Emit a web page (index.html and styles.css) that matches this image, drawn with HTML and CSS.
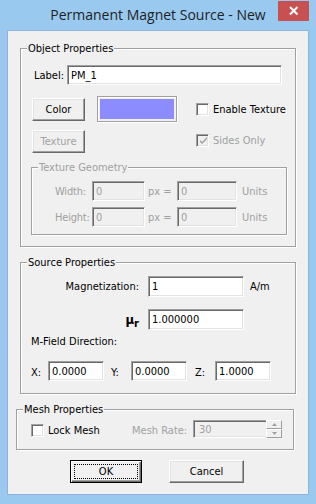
FILE: index.html
```html
<!DOCTYPE html>
<html>
<head>
<meta charset="utf-8">
<title>Permanent Magnet Source - New</title>
<link rel="stylesheet" href="styles.css">
</head>
<body>
<div class="window">
  <div class="titlebar">
    <div></div>
    <div class="title">Permanent Magnet Source - New</div>
    <div class="close"><svg width="31" height="20" viewBox="0 0 31 20"><path d="M12 6 L19.5 13.5 M19.5 6 L12 13.5" stroke="#fff" stroke-width="2" fill="none"/></svg></div>
  </div>
  <div class="client">
    <div class="group g-object">
      <div class="legend">Object Properties</div>
      <div class="row r-label">
        <span class="lbl-label">Label:</span>
        <div class="edit e-label">PM_1</div>
      </div>
      <div class="row r-color">
        <div class="btn b-color">Color</div>
        <div class="swatch"><div class="swatch-fill"></div></div>
        <div class="check c-enable"><span class="cb"></span><span>Enable Texture</span></div>
      </div>
      <div class="row r-texture">
        <div class="btn b-texture disabled">Texture</div>
        <div class="check c-sides disabled"><span class="cb cb-dis"><svg width="9" height="9" viewBox="0 0 9 9"><path d="M1 3 L1 5 L3 7 L8 2 L8 0 L3 5 Z" fill="#a0a0a0"/></svg></span><span>Sides Only</span></div>
      </div>
      <div class="group g-texgeom disabled">
        <div class="legend">Texture Geometry</div>
        <div class="geo-row g1">
          <span class="geo-lbl">Width:</span>
          <div class="edit e-dis e-px">0</div>
          <span class="px">px =</span>
          <div class="edit e-dis e-units">0</div>
          <span class="units">Units</span>
        </div>
        <div class="geo-row g2">
          <span class="geo-lbl">Height:</span>
          <div class="edit e-dis e-px">0</div>
          <span class="px">px =</span>
          <div class="edit e-dis e-units">0</div>
          <span class="units">Units</span>
        </div>
      </div>
    </div>

    <div class="group g-source">
      <div class="legend">Source Properties</div>
      <div class="row r-mag">
        <span class="src-lbl">Magnetization:</span>
        <div class="edit e-src">1</div>
        <span class="unit-am">A/m</span>
      </div>
      <div class="row r-mu">
        <span class="src-lbl mu"><b>μ<sub>r</sub></b></span>
        <div class="edit e-src">1.000000</div>
      </div>
      <div class="mfield">M-Field Direction:</div>
      <div class="row r-xyz">
        <span class="ax ax-x">X:</span>
        <div class="edit e-xyz">0.0000</div>
        <span class="ax ax-y">Y:</span>
        <div class="edit e-xyz">0.0000</div>
        <span class="ax ax-z">Z:</span>
        <div class="edit e-xyz">1.0000</div>
      </div>
    </div>

    <div class="group g-mesh">
      <div class="legend">Mesh Properties</div>
      <div class="row r-mesh">
        <div class="check c-lock"><span class="cb"></span><span>Lock Mesh</span></div>
        <span class="mesh-rate disabled">Mesh Rate:</span>
        <div class="spin">
          <div class="spin-val">30</div>
          <div class="spin-btns">
            <div class="sb"><svg width="5" height="3" viewBox="0 0 5 3"><path d="M2.5 0 L5 3 L0 3 Z" fill="#a0a0a0"/></svg></div>
            <div class="sb"><svg width="5" height="3" viewBox="0 0 5 3"><path d="M0 0 L5 0 L2.5 3 Z" fill="#a0a0a0"/></svg></div>
          </div>
        </div>
      </div>
    </div>

    <div class="row r-buttons">
      <div class="btn b-ok"><span>OK</span></div>
      <div class="btn b-cancel">Cancel</div>
    </div>
  </div>
</div>
</body>
</html>
```

FILE: styles.css
```css
* { box-sizing: border-box; }
html, body { margin: 0; padding: 0; }
body {
  width: 316px;
  height: 504px;
  overflow: hidden;
  font-family: "DejaVu Sans Condensed", "DejaVu Sans", sans-serif;
  font-size: 11px;
  line-height: 13px;
  color: #000;
}
.window {
  width: 316px;
  height: 504px;
  background: #99c9ef;
  display: flex;
  flex-direction: column;
  padding: 0 7px 9px 7px;
}
.titlebar {
  height: 30px;
  margin: 0 -7px;
  display: grid;
  grid-template-columns: 1fr auto 1fr;
  align-items: start;
}
.title {
  font-family: "Open Sans", "Noto Sans", sans-serif;
  font-size: 14px;
  line-height: 30px;
  color: #1f1f1f;
  white-space: nowrap;
}
.close {
  justify-self: end;
  margin: 1px 7px 0 0;
  width: 31px;
  height: 20px;
  background: #c75050;
}
.close svg { display: block; }
.client {
  flex: 1;
  background: #f0f0f0;
  border: 1px solid #8db4dc;
  display: flex;
  flex-direction: column;
  align-items: flex-start;
}
.row { display: flex; align-items: center; }
.disabled { color: #a0a0a0; }

.group {
  position: relative;
  border: 1px solid #a0a0a0;
  box-shadow: 1px 1px 0 #fff, inset 1px 1px 0 #fff;
  display: flex;
  flex-direction: column;
  align-items: flex-start;
}
.legend {
  position: absolute;
  top: -7px;
  left: 6px;
  padding: 0 1px;
  background: #f0f0f0;
  white-space: nowrap;
}

.edit {
  height: 20px;
  background: #fff;
  border: 1px solid;
  border-color: #a0a0a0 #fff #fff #a0a0a0;
  box-shadow: inset 1px 1px 0 #696969, inset -1px -1px 0 #e3e3e3;
  padding: 3px 0 0 3px;
  white-space: nowrap;
}
.e-dis { background: #f0f0f0; color: #a0a0a0; }

.btn {
  height: 23px;
  background: #f0f0f0;
  border: 1px solid;
  border-color: #fff #696969 #696969 #fff;
  box-shadow: inset -1px -1px 0 #a0a0a0, inset 1px 1px 0 #e3e3e3;
  display: flex;
  align-items: center;
  justify-content: center;
}

.check { display: flex; align-items: center; gap: 4px; white-space: nowrap; }
.cb {
  width: 13px;
  height: 13px;
  flex: none;
  background: #fff;
  border: 1px solid;
  border-color: #a0a0a0 #fff #fff #a0a0a0;
  box-shadow: inset 1px 1px 0 #696969, inset -1px -1px 0 #e3e3e3;
  display: flex;
  align-items: center;
  justify-content: center;
}
.cb-dis { background: #f0f0f0; }
.cb svg { display: block; margin: 1px 0 0 1px; }

/* Object Properties */
.g-object {
  margin: 17px 0 0 12px;
  width: 276px;
  height: 199px;
}
.r-label { margin-top: 16px; padding-left: 13px; }
.lbl-label { width: 33px; }
.e-label { width: 215px; }

.r-color { margin-top: 11px; padding-left: 11px; align-items: flex-start; height: 27px; }
.b-color { width: 53px; margin-top: 2px; }
.swatch {
  margin-left: 12px;
  width: 80px;
  height: 26px;
  border: 1px solid #a0a0a0;
  box-shadow: 1px 1px 0 #fff, inset 1px 1px 0 #fff;
  padding: 2px;
}
.swatch-fill { width: 100%; height: 100%; background: #8c8cff; }
.c-enable { margin: 7px 0 0 19px; }

.r-texture { margin-top: 7px; padding-left: 11px; align-items: flex-start; height: 23px; }
.b-texture { width: 53px; }
.c-sides { margin: 4px 0 0 111px; }

.g-texgeom {
  margin: 14px 0 0 10px;
  width: 256px;
  height: 68px;
}
.geo-row { display: flex; align-items: center; padding-left: 23px; }
.geo-row.g1 { margin-top: 13px; }
.geo-row.g2 { margin-top: 6px; }
.geo-lbl { width: 37px; letter-spacing: -0.2px; white-space: nowrap; }
.e-px { width: 53px; }
.px { width: 29px; margin-left: 3px; }
.e-units { width: 60px; }
.units { margin-left: 5px; }

/* Source Properties */
.g-source {
  margin: 15px 0 0 12px;
  width: 276px;
  height: 132px;
}
.r-mag { margin-top: 13px; }
.src-lbl { width: 118px; text-align: right; margin-right: 9px; }
.e-src { width: 96px; height: 21px; }
.unit-am { margin-left: 6px; }
.r-mu { margin-top: 12px; }
.mu b { font-size: 13px; font-weight: bold; }
.mu sub { font-size: 11px; vertical-align: -3px; line-height: 0; }
.mfield { margin: 5px 0 0 10px; }
.r-xyz { margin-top: 13px; padding-left: 10px; }
.ax { padding-top: 2px; }
.ax-x { width: 17px; }
.ax-y { width: 20px; margin-left: 7px; }
.ax-z { width: 20px; margin-left: 8px; }
.e-xyz { width: 56px; }

/* Mesh Properties */
.g-mesh {
  margin: 15px 0 0 8px;
  width: 278px;
  height: 41px;
}
.r-mesh { margin-top: 10px; padding-left: 14px; align-items: flex-start; }
.c-lock { margin-top: 4px; width: 101px; }
.mesh-rate { margin-top: 4px; width: 61px; white-space: nowrap; }
.spin {
  width: 89px;
  height: 18px;
  background: #f0f0f0;
  border: 1px solid;
  border-color: #a0a0a0 #fff #fff #a0a0a0;
  box-shadow: inset 1px 1px 0 #696969, inset -1px -1px 0 #e3e3e3;
  display: flex;
  justify-content: space-between;
  color: #a0a0a0;
}
.spin-val { padding: 2px 0 0 5px; }
.spin-btns { width: 16px; display: flex; flex-direction: column; margin: -1px -1px -1px 0; }
.sb {
  flex: 1;
  background: #f0f0f0;
  border: 1px solid;
  border-color: #fff #a0a0a0 #a0a0a0 #fff;
  display: flex;
  align-items: center;
  justify-content: center;
}
.sb svg { display: block; }

/* Buttons */
.r-buttons { margin-top: 10px; padding-left: 62px; }
.b-ok {
  width: 72px;
  position: relative;
  border: 1px solid #000;
  box-shadow: inset 1px 1px 0 #fff, inset -1px -1px 0 #696969, inset -2px -2px 0 #a0a0a0;
}
.b-ok::after {
  content: "";
  position: absolute;
  top: 3px; left: 3px; right: 3px; bottom: 3px;
  border: 1px dotted #000;
}
.b-cancel { width: 75px; margin-left: 27px; }
```
